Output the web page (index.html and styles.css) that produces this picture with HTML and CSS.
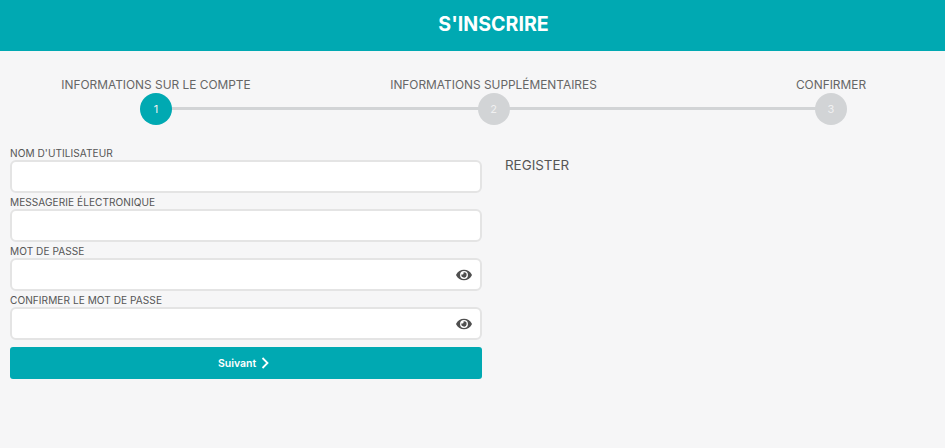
FILE: index.html
```html
<!DOCTYPE html>
<html lang="fr">
<head>
  <meta charset="UTF-8">
  <meta name="viewport" content="width=device-width, initial-scale=1.0">
  <title>S'inscrire</title>
  <link rel="stylesheet" href="styles.css">
</head>
<body>
  <header class="header">
    <h1>S'INSCRIRE</h1>
  </header>

  <div class="stepper">
    <div class="step active">
      <span class="step-label">INFORMATIONS SUR LE COMPTE</span>
      <span class="step-circle">1</span>
    </div>
    <div class="step">
      <span class="step-label">INFORMATIONS SUPPLÉMENTAIRES</span>
      <span class="step-circle">2</span>
    </div>
    <div class="step">
      <span class="step-label">CONFIRMER</span>
      <span class="step-circle">3</span>
    </div>
  </div>

  <main class="content">
    <form class="form">
      <div class="field">
        <label for="username">NOM D'UTILISATEUR</label>
        <input type="text" id="username" name="username">
      </div>
      <div class="field">
        <label for="email">MESSAGERIE ÉLECTRONIQUE</label>
        <input type="email" id="email" name="email">
      </div>
      <div class="field">
        <label for="password">MOT DE PASSE</label>
        <div class="input-wrap">
          <input type="password" id="password" name="password">
          <svg class="eye" viewBox="0 0 576 512" aria-hidden="true"><path d="M572.52 241.4C518.29 135.59 410.93 64 288 64S57.68 135.64 3.48 241.41a32.35 32.35 0 0 0 0 29.19C57.71 376.41 165.07 448 288 448s230.32-71.64 284.52-177.41a32.35 32.35 0 0 0 0-29.19zM288 400a144 144 0 1 1 144-144 143.93 143.93 0 0 1-144 144zm0-240a95.31 95.31 0 0 0-25.31 3.79 47.85 47.85 0 0 1-66.9 66.9A95.78 95.78 0 1 0 288 160z"/></svg>
        </div>
      </div>
      <div class="field">
        <label for="confirm">CONFIRMER LE MOT DE PASSE</label>
        <div class="input-wrap">
          <input type="password" id="confirm" name="confirm">
          <svg class="eye" viewBox="0 0 576 512" aria-hidden="true"><path d="M572.52 241.4C518.29 135.59 410.93 64 288 64S57.68 135.64 3.48 241.41a32.35 32.35 0 0 0 0 29.19C57.71 376.41 165.07 448 288 448s230.32-71.64 284.52-177.41a32.35 32.35 0 0 0 0-29.19zM288 400a144 144 0 1 1 144-144 143.93 143.93 0 0 1-144 144zm0-240a95.31 95.31 0 0 0-25.31 3.79 47.85 47.85 0 0 1-66.9 66.9A95.78 95.78 0 1 0 288 160z"/></svg>
        </div>
      </div>
      <button type="button" class="next">
        Suivant
        <svg class="chevron" viewBox="0 0 8 12" aria-hidden="true"><polyline points="1.5,1 6.5,6 1.5,11"/></svg>
      </button>
    </form>
    <p class="side">REGISTER</p>
  </main>
</body>
</html>
```

FILE: styles.css
```css
body {
  font-family: Inter, "Open Sans", sans-serif;
  background-color: #f6f6f7;
  margin: 0;
  padding: 0;
  color: #555555;
}
.header {
  box-sizing: border-box;
  height: 51px;
  padding: 0 0 3px 42px;
  background-color: #00a9b2;
  display: flex;
  align-items: center;
  justify-content: center;
}
.header h1 {
  margin: 0;
  color: #ffffff;
  font-size: 19.6px;
  font-weight: 700;
}
.stepper {
  position: relative;
  display: flex;
  justify-content: space-between;
  padding: 26px 19px 0 61px;
}
.stepper::before {
  content: "";
  position: absolute;
  left: 156px;
  right: 114px;
  top: 56px;
  height: 3px;
  background-color: #d2d4d6;
}
.step {
  position: relative;
  width: 190px;
  display: flex;
  flex-direction: column;
  align-items: center;
}
.step-label {
  font-size: 11.9px;
  line-height: 16px;
  color: #666666;
  white-space: nowrap;
}
.step-circle {
  width: 32px;
  height: 32px;
  border-radius: 50%;
  background-color: #d2d4d6;
  color: #f0f0f1;
  font-size: 11px;
  display: flex;
  align-items: center;
  justify-content: center;
}
.step.active .step-circle {
  background-color: #00a9b2;
}
.content {
  display: flex;
  gap: 23px;
  padding: 21px 10px 0;
}
.form {
  width: 472px;
  display: flex;
  flex-direction: column;
}
.field {
  display: flex;
  flex-direction: column;
  margin-bottom: 2px;
}
.field label {
  font-size: 10.1px;
  line-height: 14px;
  letter-spacing: 0.05px;
  color: #555555;
}
.field input {
  display: block;
  box-sizing: border-box;
  width: 100%;
  height: 33px;
  background: #ffffff;
  border: 2px solid #e4e4e4;
  border-radius: 6px;
  outline: none;
}
.input-wrap {
  position: relative;
}
.eye {
  position: absolute;
  right: 10px;
  top: 10px;
  width: 16px;
  height: 14px;
  fill: #4f4f4f;
}
.next {
  margin-top: 5px;
  height: 32px;
  padding: 0 5px 0 0;
  background-color: #00a9b2;
  color: #ffffff;
  border: none;
  border-radius: 3px;
  font-family: inherit;
  font-size: 10.5px;
  font-weight: 600;
  display: flex;
  align-items: center;
  justify-content: center;
  gap: 5px;
}
.chevron {
  width: 8px;
  height: 12px;
  fill: none;
  stroke: #ffffff;
  stroke-width: 1.8;
}
.side {
  margin: 10px 0 0;
  font-size: 13.4px;
  line-height: 18px;
  color: #555555;
}
```
